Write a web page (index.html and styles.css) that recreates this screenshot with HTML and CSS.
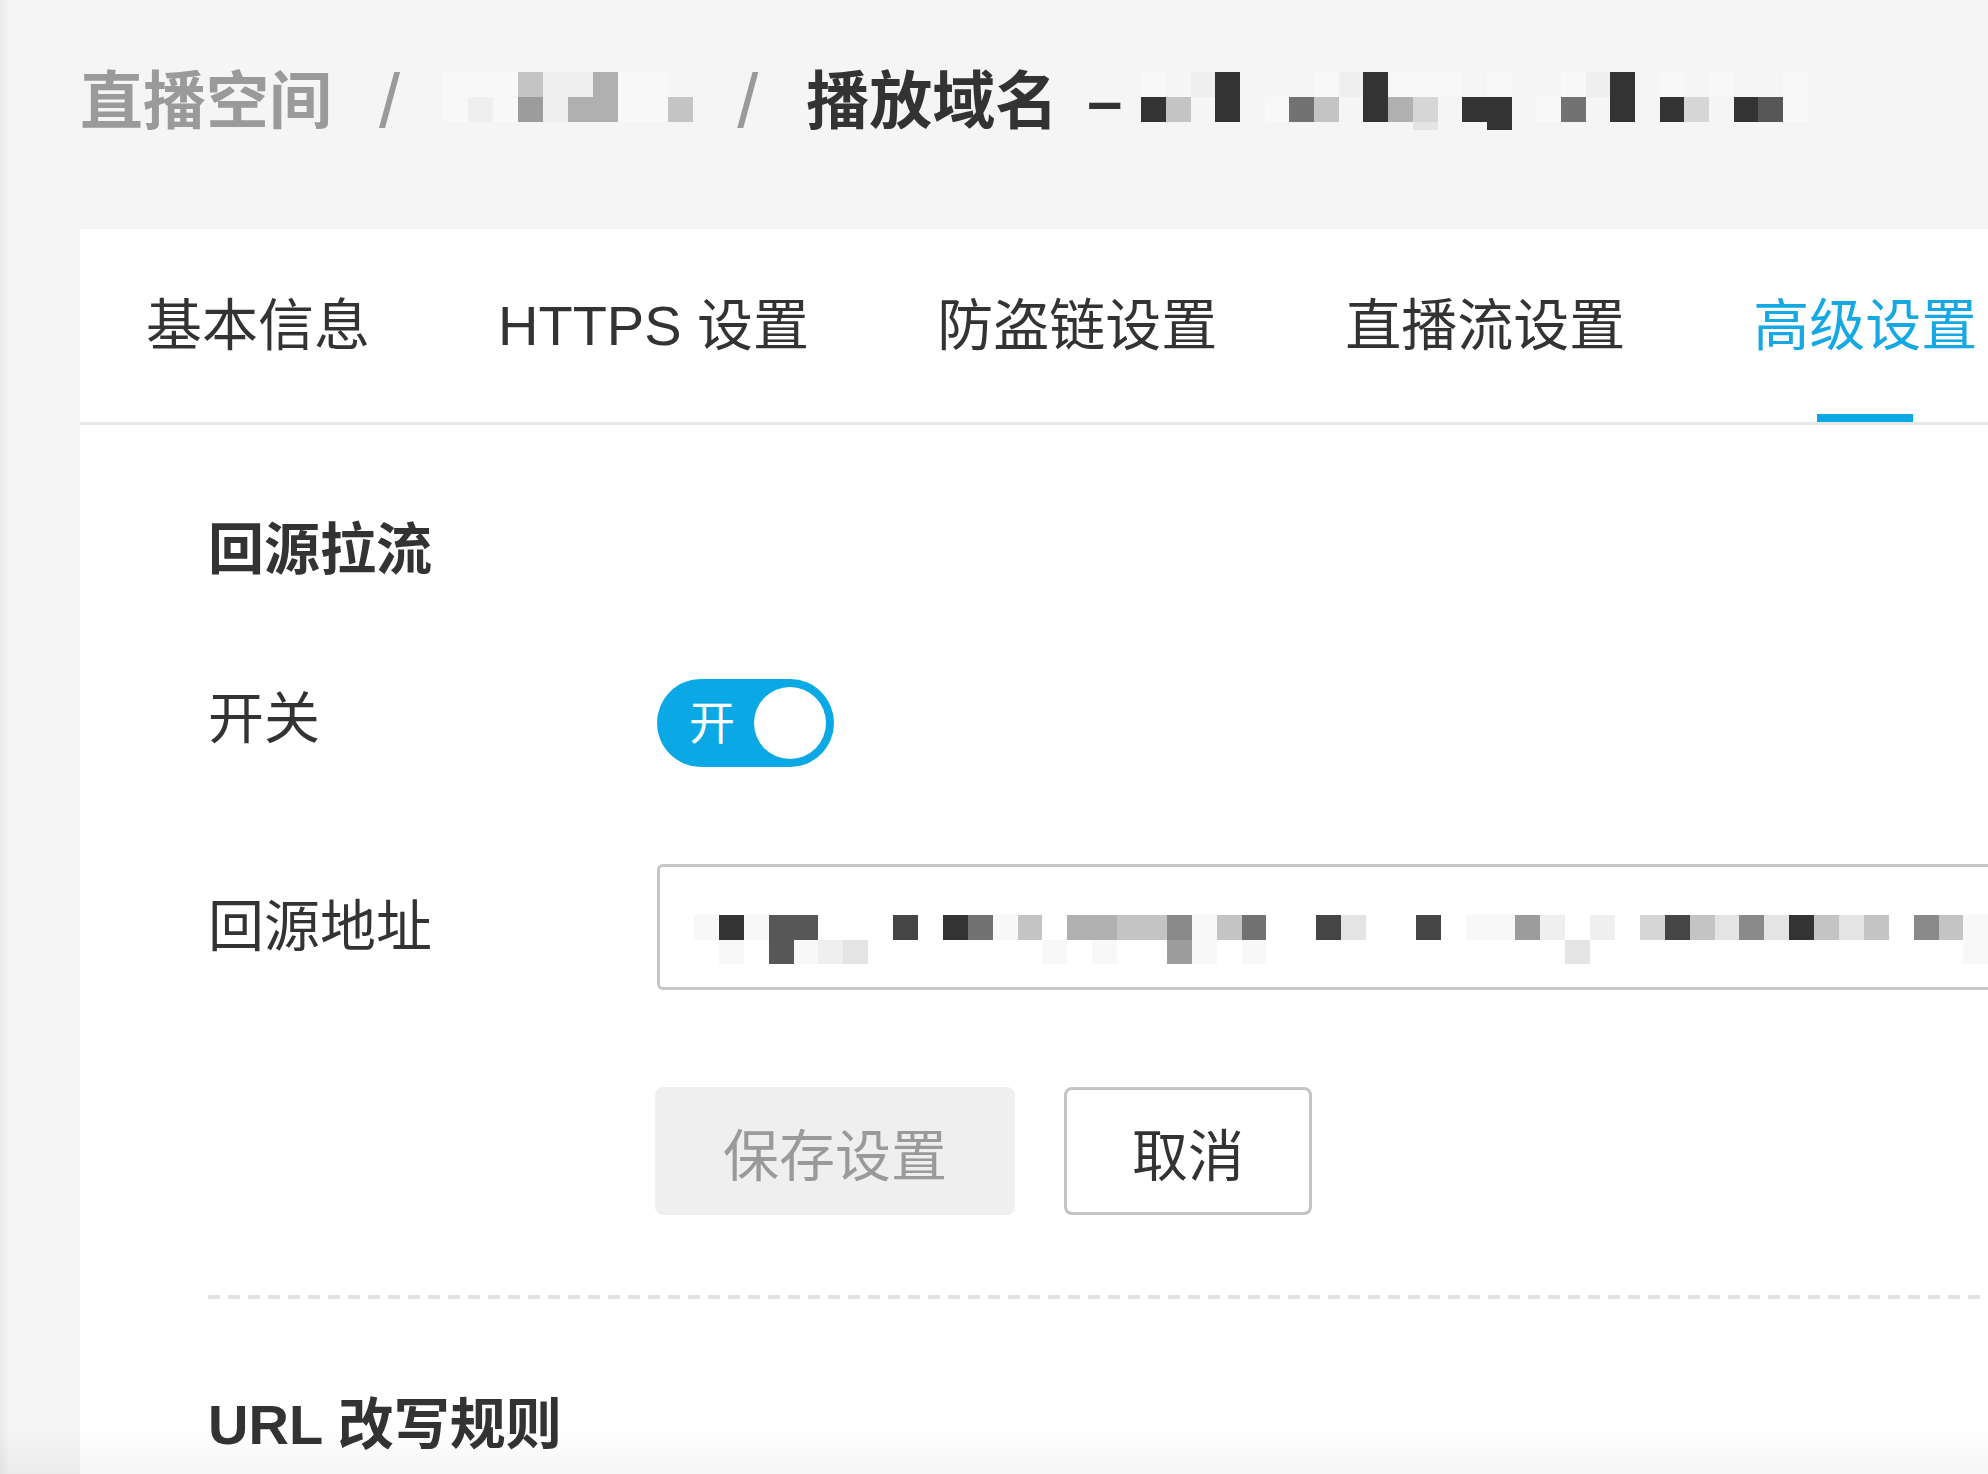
FILE: index.html
```html
<!DOCTYPE html>
<html lang="zh-CN">
<head>
<meta charset="utf-8">
<title>播放域名 - 高级设置</title>
<link rel="stylesheet" href="styles.css">
</head>
<body>
<div class="page">
  <nav class="crumbs">
    <span class="crumb">直播空间</span>
    <span class="crumb-sep">/</span>
    <span class="mosaic m-a" aria-label="已隐藏">
      <i class="s1"></i><i class="s1"></i><i class="s1"></i><i class="s5"></i><i class="s2"></i><i class="s2"></i><i class="s6"></i><i class="s1"></i><i class="s1"></i><i></i>
      <i class="s1"></i><i class="s2"></i><i class="s1"></i><i class="s7"></i><i class="s2"></i><i class="s6"></i><i class="s6"></i><i class="s1"></i><i class="s1"></i><i class="s5"></i>
    </span>
    <span class="crumb-sep sep2">/</span>
    <span class="crumb current">播放域名</span>
    <span class="crumb current dash">–</span>
    <span class="mosaic m-b" aria-label="已隐藏">
      <i class="s1"></i><i></i><i class="s2"></i><i class="s12"></i><i></i><i></i><i></i><i class="s1"></i><i class="s2"></i><i class="s12"></i><i class="s1"></i><i class="s1"></i><i class="s1"></i><i></i><i class="s1"></i><i></i><i></i><i class="s1"></i><i class="s2"></i><i class="s12"></i><i></i><i class="s1"></i><i></i><i class="s1"></i><i></i><i></i><i class="s1"></i>
      <i class="s12"></i><i class="s5"></i><i></i><i class="s12"></i><i></i><i class="s1"></i><i class="s9"></i><i class="s5"></i><i></i><i class="s12"></i><i class="s6"></i><i class="s4"></i><i></i><i class="s12"></i><i class="s12"></i><i></i><i class="s1"></i><i class="s9"></i><i></i><i class="s12"></i><i></i><i class="s12"></i><i class="s4"></i><i></i><i class="s12"></i><i class="s10"></i><i class="s1"></i>
      <i></i><i></i><i></i><i></i><i></i><i></i><i></i><i></i><i></i><i></i><i></i><i class="s3"></i><i></i><i></i><i class="s12"></i>
    </span>
  </nav>

  <main class="card">
    <div class="tabs">
      <a class="tab">基本信息</a>
      <a class="tab">HTTPS 设置</a>
      <a class="tab">防盗链设置</a>
      <a class="tab">直播流设置</a>
      <a class="tab active">高级设置</a>
    </div>

    <div class="content">
      <h2 class="section-title">回源拉流</h2>

      <div class="row row-switch">
        <div class="label">开关</div>
        <div class="toggle on"><span class="toggle-text">开</span><span class="knob"></span></div>
      </div>

      <div class="row row-addr">
        <div class="label">回源地址</div>
        <div class="input">
          <span class="mosaic m-c" aria-label="已隐藏">
            <i class="s1"></i><i class="s12"></i><i class="s1"></i><i class="s10"></i><i class="s10"></i><i></i><i></i><i></i><i class="s11"></i><i></i><i class="s12"></i><i class="s9"></i><i class="s1"></i><i class="s5"></i><i></i><i class="s6"></i><i class="s6"></i><i class="s5"></i><i class="s5"></i><i class="s8"></i><i class="s1"></i><i class="s5"></i><i class="s9"></i><i></i><i></i><i class="s11"></i><i class="s3"></i><i></i><i></i><i class="s11"></i><i></i><i class="s1"></i><i class="s1"></i><i class="s7"></i><i class="s2"></i><i></i><i class="s2"></i><i></i><i class="s4"></i><i class="s11"></i><i class="s5"></i><i class="s3"></i><i class="s8"></i><i class="s3"></i><i class="s12"></i><i class="s5"></i><i class="s3"></i><i class="s5"></i><i></i><i class="s8"></i><i class="s5"></i><i class="s1"></i>
            <i></i><i class="s1"></i><i></i><i class="s10"></i><i class="s1"></i><i class="s2"></i><i class="s3"></i><i></i><i></i><i></i><i></i><i></i><i></i><i></i><i class="s1"></i><i></i><i class="s1"></i><i></i><i></i><i class="s7"></i><i class="s1"></i><i></i><i class="s1"></i><i></i><i></i><i></i><i></i><i></i><i></i><i></i><i></i><i></i><i></i><i></i><i></i><i class="s3"></i><i></i><i></i><i></i><i></i><i></i><i></i><i></i><i></i><i></i><i></i><i></i><i></i><i></i><i></i><i></i><i class="s1"></i>
          </span>
        </div>
      </div>

      <div class="actions">
        <button class="btn btn-save" type="button" disabled>保存设置</button>
        <button class="btn btn-cancel" type="button">取消</button>
      </div>

      <div class="divider"></div>

      <h2 class="section-title url">URL 改写规则</h2>
    </div>
  </main>
</div>
</body>
</html>
```

FILE: styles.css
```css
html, body {
  margin: 0;
  padding: 0;
}

body {
  background: linear-gradient(to right, #ebebeb 0, #f5f5f5 10px);
  font-family: "Liberation Sans", "Noto Sans CJK SC", sans-serif;
  color: #333;
  overflow: hidden;
  width: 1988px;
  height: 1474px;
}

body::after {
  content: "";
  position: fixed;
  left: 0;
  right: 0;
  bottom: 0;
  height: 46px;
  background: linear-gradient(rgba(0, 0, 0, 0), rgba(0, 0, 0, 0.035));
  pointer-events: none;
}

.page {
  padding: 69px 0 0 80px;
  box-sizing: border-box;
  height: 1474px;
  display: flex;
  flex-direction: column;
}

/* breadcrumb */
.crumbs {
  display: flex;
  align-items: flex-start;
  height: 64px;
  margin-bottom: 96px;
  font-size: 63px;
  line-height: 64px;
  font-weight: 600;
  color: #9a9a9a;
  white-space: nowrap;
  flex: none;
}

.crumb {
  flex: none;
}

.crumb.current {
  color: #333;
  margin-left: 48px;
}

.crumb.dash {
  margin-left: 29px;
}

.crumb-sep {
  flex: none;
  font-size: 76px;
  line-height: 64px;
  font-weight: 400;
  color: #9a9a9a;
  margin-left: 47px;
}

.crumb-sep.sep2 {
  margin-left: 44px;
}

/* mosaic (redacted text) */
.mosaic {
  display: grid;
  flex: none;
}

.mosaic i {
  display: block;
}

.m-a {
  grid-template-columns: repeat(10, 25px);
  grid-template-rows: 25px 25px;
  margin: 3px 0 0 43px;
}

.m-b {
  grid-template-columns: repeat(27, 24.7px);
  grid-template-rows: 25px 25px 8px;
  margin: 3px 0 0 19px;
}

.m-c {
  grid-template-columns: repeat(52, 24.9px);
  grid-template-rows: 25px 24px;
}

.s1 { background: #f8f8f8; }
.s2 { background: #efefef; }
.s3 { background: #e4e4e4; }
.s4 { background: #d6d6d6; }
.s5 { background: #c4c4c4; }
.s6 { background: #b0b0b0; }
.s7 { background: #9c9c9c; }
.s8 { background: #8a8a8a; }
.s9 { background: #727272; }
.s10 { background: #575757; }
.s11 { background: #454545; }
.s12 { background: #333333; }

/* card */
.card {
  flex: 1;
  background: #fff;
  overflow: hidden;
}

.tabs {
  display: flex;
  height: 193px;
  border-bottom: 3px solid #e8e8e8;
  padding-left: 2px;
}

.tab {
  position: relative;
  padding: 0 64px;
  font-size: 56px;
  line-height: 193px;
  color: #333;
  white-space: nowrap;
  cursor: pointer;
}

.tab.active {
  color: #16a8e2;
}

.tab.active::after {
  content: "";
  position: absolute;
  left: 50%;
  bottom: 0;
  width: 96px;
  height: 8px;
  margin-left: -48px;
  background: #0aa8e4;
}

.content {
  padding: 97px 0 0 128px;
}

.section-title {
  margin: 0;
  font-size: 56px;
  line-height: 56px;
  font-weight: 700;
  color: #333;
}

.section-title.url {
  margin-top: 98px;
}

.row {
  display: flex;
  align-items: center;
}

.label {
  flex: none;
  width: 449px;
  font-size: 56px;
  line-height: 56px;
  color: #333;
}

.row-switch {
  margin-top: 101px;
}

.row-switch .label {
  margin-top: -8px;
}

.toggle {
  flex: none;
  display: flex;
  align-items: center;
  justify-content: space-between;
  box-sizing: border-box;
  width: 177px;
  height: 88px;
  padding: 0 8px 0 32px;
  border-radius: 44px;
  background: #0aa8e4;
  color: #fff;
}

.toggle-text {
  font-size: 46px;
  line-height: 46px;
}

.knob {
  width: 72px;
  height: 72px;
  border-radius: 50%;
  background: #fff;
}

.row-addr {
  margin-top: 97px;
}

.input {
  flex: 1;
  height: 126px;
  box-sizing: border-box;
  border: 3px solid #c6c6c6;
  border-radius: 6px;
  padding: 48px 0 0 34px;
  margin-right: -60px;
  overflow: hidden;
}

.actions {
  display: flex;
  gap: 49px;
  margin-top: 97px;
  padding-left: 447px;
}

.btn {
  height: 128px;
  box-sizing: border-box;
  border-radius: 8px;
  font-family: inherit;
  font-size: 56px;
  padding: 0;
}

.btn-save {
  width: 360px;
  border: 0;
  background: #efefef;
  color: #9a9a9a;
}

.btn-cancel {
  width: 248px;
  border: 3px solid #c4c4c4;
  background: #fff;
  color: #333;
  cursor: pointer;
}

.divider {
  margin-top: 80px;
  height: 4px;
  background: repeating-linear-gradient(to right, #e2e2e2 0, #e2e2e2 12px, transparent 12px, transparent 20px);
}
```
